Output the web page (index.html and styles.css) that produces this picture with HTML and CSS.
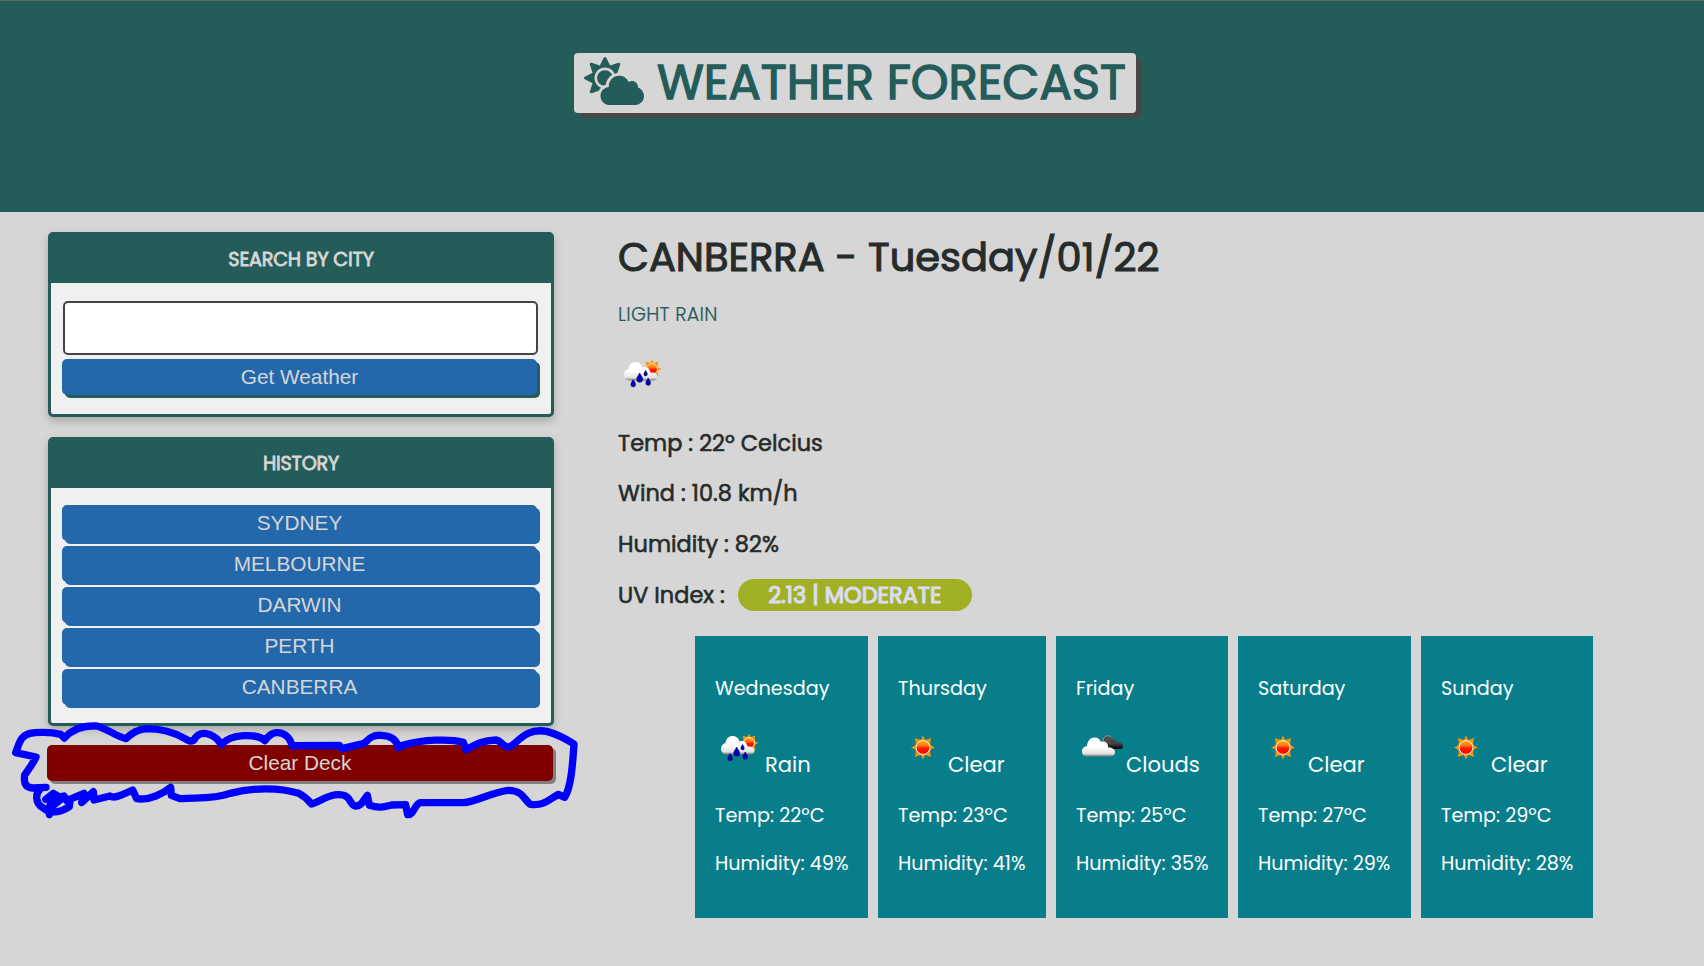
FILE: index.html
```html
<!DOCTYPE html>
<html lang="en">
<head>
<meta charset="utf-8">
<title>Weather Forecast</title>
<link rel="stylesheet" href="styles.css">
</head>
<body>
<svg class="defs" width="0" height="0" aria-hidden="true">
  <defs>
    <linearGradient id="white" x1="0" y1="0" x2="0" y2="1"><stop offset=".5" stop-color="#fff"/><stop offset=".85" stop-color="#e2e2e2"/><stop offset="1" stop-color="#777"/></linearGradient>
    <linearGradient id="dark" x1="0" y1="0" x2="0" y2="1"><stop offset="0" stop-color="#555"/><stop offset=".6" stop-color="#444"/><stop offset="1" stop-color="#000"/></linearGradient>
    <linearGradient id="disc" x1="0" y1="0" x2="0" y2="1"><stop offset="0" stop-color="#ffb020"/><stop offset=".35" stop-color="#ff7a10"/><stop offset=".55" stop-color="#ff1800"/><stop offset="1" stop-color="#f00"/></linearGradient>
    <symbol id="sun" viewBox="0 0 24 24">
      <path fill="#f7960c" d="M12 0l2.1 4.400 2.500-.7 3.600-1.200-1 3.700.3 3.500L24 12l-4.500 2.300-.3 3.500 1 3.700-3.600-1.200-2.500-.7L12 24l-2.100-4.400-2.500.7-3.600 1.200 1-3.700-.3-3.500L0 12l4.500-2.300.3-3.500-1-3.700 3.600 1.200 2.500.7z"/>
      <circle cx="12" cy="12" r="6.900" fill="url(#disc)" stroke="#fff3d0" stroke-width="1"/>
    </symbol>
    <symbol id="clear" viewBox="0 0 50 50"><use href="#sun" x="13" y="11.5" width="24" height="24"/></symbol>
    <symbol id="rain" viewBox="0 0 50 50">
      <use href="#sun" x="24.5" y="9.500" width="19" height="19"/>
      <path fill="url(#white)" d="M12 30.500C8 30.500 6 27.500 6 25c0-3.500 2-5.500 4.500-6C11 14.500 14 12 17.500 12c4 0 6.500 2.500 7 5.500 4-1.500 7.500 1 7.800 5C36 22 39.500 23.500 39.500 26.500c0 2.500-2 4-4.500 4z"/>
      <g fill="#0000b4" stroke="#000060" stroke-width=".5">
        <path d="M21.700 23c1.500 2.800 3 4.300 3 6.300a3 3 0 0 1-6 0c0-2 1.500-3.500 3-6.300zM15.200 29.500c1.200 2 2.400 3.400 2.400 5a2.400 2.400 0 0 1-4.800 0c0-1.600 1.200-3 2.400-5zM30.200 28c1.200 2 2.400 3.400 2.400 5a2.400 2.400 0 0 1-4.800 0c0-1.600 1.200-3 2.400-5zM27.600 20.500c.9 1.600 1.700 2.500 1.700 3.700a1.700 1.700 0 0 1-3.400 0c0-1.200.8-2.100 1.700-3.700z"/>
      </g>
    </symbol>
    <symbol id="clouds" viewBox="0 0 50 50">
      <path fill="url(#dark)" d="M30 25c-4 0-5-4-3-7 0-4 2-6.500 4.500-6.500 2.500 0 4 1.500 4.500 3 2.500-.5 4.500 1 5 3.500 3.500 0 6 1.500 6 4 0 1.800-1 3-3 3z"/>
      <path fill="none" stroke="#aaa" stroke-width=".7" d="M27 17c0-3.500 2-5.300 4.500-5.300 1.500 0 2.800.6 3.600 1.600"/>
      <path fill="url(#white)" d="M10.500 32.500C7.500 32.500 6 30 6 27.500c0-3.500 2.500-5 5-5.500.5-5.500 3.500-8.500 7.500-8.500 3.500 0 5.500 2 6.500 4.500 4-1.500 7.200 1 7.200 5.500 3.500-.2 6.800 1.500 6.800 4.500 0 3-2 4.500-4.500 4.500z"/>
    </symbol>
  </defs>
</svg>

<header class="banner">
  <h1 class="title">
    <svg class="title-icon" viewBox="0 0 640 512"><path fill="currentColor" d="M575.2 325.7c.2-1.900.8-3.700.8-5.600 0-35.300-28.700-64-64-64-12.600 0-24.200 3.800-34.100 10-17.600-38.800-56.500-66-101.900-66-61.800 0-112 50.100-112 112 0 3 .7 5.800.9 8.700-49.600 3.700-88.900 44.700-88.900 95.300 0 53 43 96 96 96h272c53 0 96-43 96-96 0-42.100-27.200-77.400-64.800-90.400zm-430.400-22.600c-43.700-43.700-43.700-114.700 0-158.300 43.700-43.700 114.700-43.700 158.400 0 9.700 9.700 16.900 20.900 22.300 32.700 9.800-3.700 20.100-6 30.700-7.500L386 81.100c4-11.900-7.300-23.100-19.200-19.200L279 91.200 237.500 8.400C232-2.800 216-2.800 210.400 8.400L169 91.200 81.100 61.900C69.300 58 58 69.300 61.900 81.100l29.300 87.800-82.800 41.500c-11.200 5.600-11.200 21.500 0 27.100l82.800 41.400-29.300 87.800c-4 11.900 7.300 23.100 19.200 19.200l76.100-25.300c6.100-12.400 14-23.700 23.600-33.500-13.100-5.400-25.400-13.400-36-24zm-4.800-79.200c0 40.800 29.300 74.800 67.900 82.300 8-4.700 16.300-8.800 25.200-11.700 5.400-44.300 31-82.500 67.400-105C287.300 160.400 258 140 224 140c-46.300 0-84 37.600-84 83.900z"/></svg>
    <span>WEATHER FORECAST</span>
  </h1>
</header>

<main class="content">
  <aside class="sidebar">
    <section class="panel search">
      <h2 class="panel-title">SEARCH BY CITY</h2>
      <div class="panel-body">
        <input class="city-input" type="text" aria-label="City">
        <button class="btn btn-search">Get Weather</button>
      </div>
    </section>
    <section class="panel history">
      <h2 class="panel-title">HISTORY</h2>
      <div class="panel-body">
        <button class="btn">SYDNEY</button>
        <button class="btn">MELBOURNE</button>
        <button class="btn">DARWIN</button>
        <button class="btn">PERTH</button>
        <button class="btn">CANBERRA</button>
      </div>
    </section>
    <div class="clear-wrap">
      <button class="btn btn-clear">Clear Deck</button>
      <svg class="scribble" viewBox="0 0 1800 360">
        <path d="M193 84L182 73C150 66 110 66 90 70C62 76 58 100 47 128L108 141C100 160 85 178 74 195C70 225 80 232 98 234L138 232M122 236C105 250 105 280 130 294C150 312 180 308 208 290L210 272L190 262L158 288L148 314L150 286L168 254L137 268L160 250L170 262L192 258L200 272L252 250L245 278L280 245L282 270L330 258C345 268 370 252 398 240L410 266C450 272 490 250 512 232L514 256L540 266C590 262 640 268 690 250C760 232 840 232 896 250C915 260 925 270 934 282C960 276 980 254 1015 254C1055 254 1046 282 1066 288C1085 290 1090 270 1102 256L1108 286C1140 296 1155 290 1175 285L1217 284L1223 314C1240 316 1244 284 1260 278L1390 278C1430 275 1470 248 1524 241C1570 240 1575 275 1592 283C1635 288 1650 265 1675 253L1694 262C1714 230 1718 160 1722 102C1680 75 1655 68 1640 64C1570 52 1548 108 1526 111C1506 110 1505 92 1488 90C1440 92 1420 108 1398 119L1390 97C1350 86 1270 88 1208 106L1195 113C1190 88 1170 77 1145 76C1115 74 1105 88 1093 100L1026 116L1018 106L876 107C870 80 850 66 828 68C812 70 802 82 795 92C775 70 690 70 665 104L650 86C625 66 596 62 582 90C572 96 565 92 555 86C520 66 480 56 440 56C410 58 395 70 378 86C350 80 322 56 290 48C250 46 215 60 193 84"/>
      </svg>
    </div>
  </aside>

  <section class="weather">
    <h2 class="city">CANBERRA - Tuesday/01/22</h2>
    <p class="summary">LIGHT RAIN</p>
    <svg class="wicon now"><use href="#rain"/></svg>
    <p class="stat">Temp : 22º Celcius</p>
    <p class="stat">Wind : 10.8 km/h</p>
    <p class="stat">Humidity : 82%</p>
    <p class="stat uv"><span>UV Index :</span><span class="pill">2.13 | MODERATE</span></p>

    <div class="forecast">
      <article class="day">
        <p class="line">Wednesday</p>
        <div class="cond"><svg class="wicon"><use href="#rain"/></svg><span>Rain</span></div>
        <p class="line">Temp: 22ºC</p><p class="line">Humidity: 49%</p>
      </article>
      <article class="day">
        <p class="line">Thursday</p>
        <div class="cond"><svg class="wicon"><use href="#clear"/></svg><span>Clear</span></div>
        <p class="line">Temp: 23ºC</p><p class="line">Humidity: 41%</p>
      </article>
      <article class="day">
        <p class="line">Friday</p>
        <div class="cond"><svg class="wicon"><use href="#clouds"/></svg><span>Clouds</span></div>
        <p class="line">Temp: 25ºC</p><p class="line">Humidity: 35%</p>
      </article>
      <article class="day">
        <p class="line">Saturday</p>
        <div class="cond"><svg class="wicon"><use href="#clear"/></svg><span>Clear</span></div>
        <p class="line">Temp: 27ºC</p><p class="line">Humidity: 29%</p>
      </article>
      <article class="day">
        <p class="line">Sunday</p>
        <div class="cond"><svg class="wicon"><use href="#clear"/></svg><span>Clear</span></div>
        <p class="line">Temp: 29ºC</p><p class="line">Humidity: 28%</p>
      </article>
    </div>
  </section>
</main>
</body>
</html>
```

FILE: styles.css
```css
* { box-sizing: border-box; }

body {
  margin: 0;
  height: 966px;
  overflow: hidden;
  background: #d6d6d6;
  color: #262b2b;
  font-family: Poppins, Inter, sans-serif;
}

h1, h2, p { margin: 0; font-weight: 400; }

.defs { position: absolute; }

.banner {
  height: 212px;
  padding: 52px 0 0 6px;
  border-top: 1px solid #666;
  background: #245c5a;
  display: flex;
  justify-content: center;
  align-items: flex-start;
}

.title {
  display: flex;
  align-items: center;
  gap: 13px;
  width: 562px;
  height: 60px;
  padding-left: 10px;
  border-radius: 4px;
  background: #d6d6d6;
  box-shadow: 6px 5px #484848;
  color: #245c5a;
  font-size: 48px;
  line-height: 60px;
  -webkit-text-stroke: 1.4px;
  white-space: nowrap;
}

.title-icon { flex: none; width: 60px; height: 48px; margin-bottom: 4px; }

.content { display: flex; padding: 20px 0 0 48px; }

.sidebar { width: 506px; display: flex; flex-direction: column; }

.panel {
  border: 3px solid #245c5a;
  border-radius: 5px;
  background: #f0f0f0;
  box-shadow: 0 4px 8px rgba(0, 0, 0, .22);
}

.search { height: 185px; margin-bottom: 20px; }
.history { height: 289px; margin-bottom: 19px; }

.panel-title {
  height: 48px;
  line-height: 47px;
  background: #245c5a;
  color: #d6d6d6;
  text-align: center;
  font-size: 19.2px;
  letter-spacing: -.2px;
  -webkit-text-stroke: .8px;
}

.search .panel-title { line-height: 49px; }

.panel-body {
  display: flex;
  flex-direction: column;
  gap: 5px;
  padding: 17px 14px 0 11px;
}

.search .panel-body { padding-top: 18px; gap: 4px; }

.city-input {
  height: 54px;
  margin: 0 -1px 0 1px;
  border: 2px solid #444;
  border-radius: 5px;
  background: #fff;
}

.btn {
  height: 36px;
  padding: 0 0 1px;
  border: 0;
  border-radius: 5px;
  background: #2468ac;
  box-shadow: 3px 3px #2468ac;
  color: #d6d6d6;
  font: 20.8px "Liberation Sans", Arial, sans-serif;
}

.btn-search { box-shadow: 3px 3px #245c5a; }

.clear-wrap { display: flex; margin: 0 1px 0 -1px; }

.btn-clear { flex: 1; background: #800000; box-shadow: 3px 3px #808080; }

.scribble {
  position: absolute;
  left: 0;
  top: 710px;
  width: 600px;
  height: 120px;
  fill: none;
  stroke: #00f;
  stroke-width: 22;
  stroke-linecap: round;
  stroke-linejoin: round;
  pointer-events: none;
}

.weather { padding: 1px 0 0 64px; display: flex; flex-direction: column; align-items: flex-start; }

.city { font-size: 40px; line-height: 48px; white-space: nowrap; -webkit-text-stroke: 1.1px; }

.summary {
  margin-top: 19px;
  color: #245c5a;
  font-size: 19.2px;
  line-height: 29px;
  font-weight: 300;
  letter-spacing: .25px;
  -webkit-text-stroke: .2px;
}

.wicon { display: block; flex: none; width: 50px; height: 50px; }

.now { margin: 21px 0 25px; }

.stat {
  height: 50.6px;
  font-size: 22.4px;
  line-height: 36px;
  letter-spacing: .03px;
  -webkit-text-stroke: .6px;
  white-space: nowrap;
}

.stat:nth-of-type(2) { height: 50px; }
.stat:nth-of-type(3) { height: 51px; }

.uv { display: flex; gap: 13px; height: 36px; }

.pill {
  width: 234px;
  height: 32px;
  margin-top: 2px;
  border-radius: 16px;
  background: #a0b024;
  color: #dcdcf0;
  text-align: center;
  line-height: 33px;
  -webkit-text-stroke: 1.2px;
}

.forecast {
  display: grid;
  grid-template-columns: 173px 168px 172px 173px 172px;
  gap: 10px;
  margin: 23.400px 0 0 77px;
}

.day {
  height: 282px;
  padding: 39px 0 0 20px;
  background: #087e8a;
  color: #fff;
  white-space: nowrap;
}

.line { height: 48px; font-size: 19.2px; line-height: 28px; }

.cond { display: flex; align-items: flex-end; height: 52px; margin: 1px 0 26px; padding-bottom: 2px; }
.cond span { font-size: 21.1px; line-height: 18px; margin-bottom: -.5px; }
```
